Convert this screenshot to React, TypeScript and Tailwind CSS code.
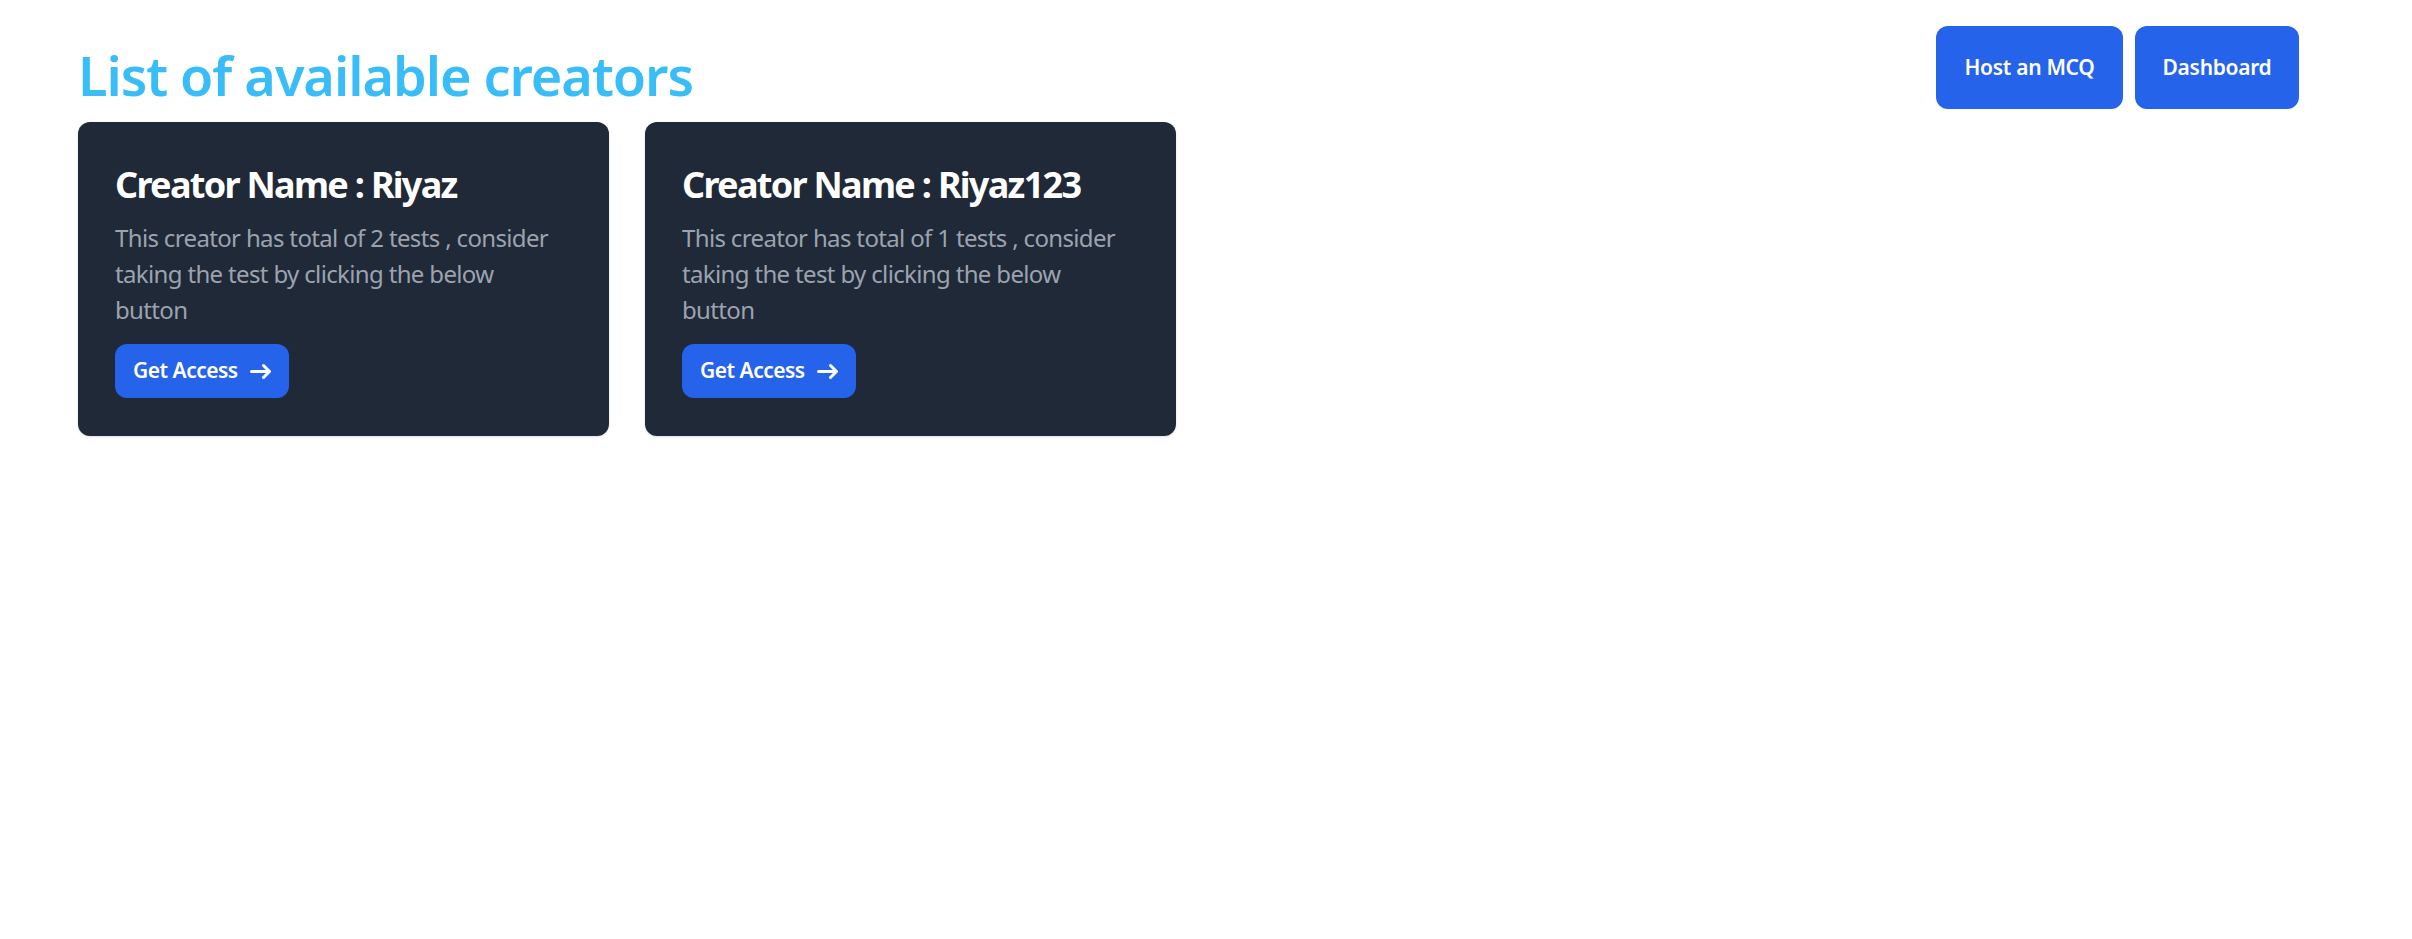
import React from "react";

const creators = [
  { name: "Riyaz", tests: 2 },
  { name: "Riyaz123", tests: 1 },
];

function Arrow() {
  return (
    <svg className="ml-[12px] w-[21px] h-[21px]" viewBox="0 0 14 10" fill="none" aria-hidden="true">
      <path stroke="currentColor" strokeLinecap="round" strokeLinejoin="round" strokeWidth="2" d="M1 5h12m0 0L9 1m4 4L9 9" />
    </svg>
  );
}

export default function App() {
  return (
    <div className="min-h-screen bg-white font-['Noto_Sans',sans-serif] pl-[78px] pr-[113px]">
      <div className="flex items-start justify-between">
        <h1 className="pt-[45px] text-[54px] leading-[60px] font-semibold text-[#38bdf8] tracking-[-1.05px]">
          List of available creators
        </h1>
        <div className="pt-[26px] flex gap-[12px]">
          <button className="w-[187px] h-[83px] rounded-[12px] bg-[#2563eb] text-white text-[21px] font-semibold tracking-[-0.3px]">
            Host an MCQ
          </button>
          <button className="w-[164px] h-[83px] rounded-[12px] bg-[#2563eb] text-white text-[21px] font-semibold tracking-[-0.3px]">
            Dashboard
          </button>
        </div>
      </div>
      <div className="mt-[13px] flex gap-[36px]">
        {creators.map((c) => (
          <div key={c.name} className="w-[531px] rounded-[12px] bg-[#1f2937] shadow-sm pl-[37px] pr-[47px] pt-[39px] pb-[38px]">
            <h5 className="mb-[11px] text-[36px] leading-[48px] font-bold text-white tracking-[-1.7px] whitespace-nowrap">
              Creator Name : {c.name}
            </h5>
            <p className="mb-[16px] text-[24px] leading-[36px] text-[#9ca3af] tracking-[-0.65px]">
              This creator has total of {c.tests} tests , consider taking the test by clicking the below button
            </p>
            <button className="inline-flex items-center h-[54px] px-[18px] rounded-[12px] bg-[#2563eb] text-white text-[21px] font-semibold tracking-[-0.5px]">
              Get Access
              <Arrow />
            </button>
          </div>
        ))}
      </div>
    </div>
  );
}
